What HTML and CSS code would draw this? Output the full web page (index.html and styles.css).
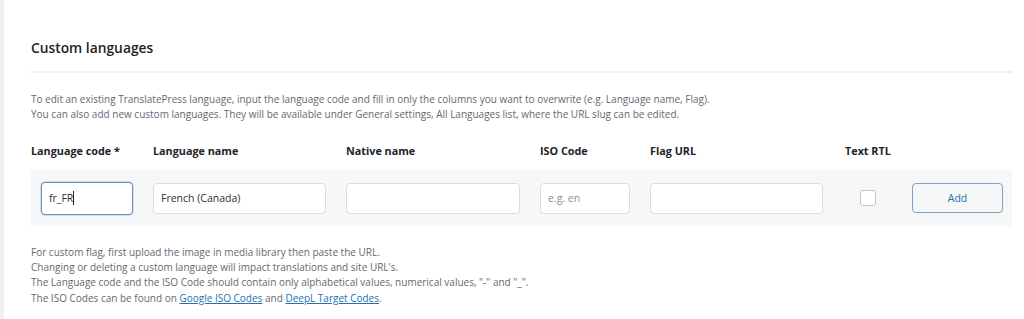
FILE: index.html
```html
<!DOCTYPE html>
<html>
<head>
<meta charset="utf-8">
<link rel="stylesheet" href="styles.css">
</head>
<body>
<div class="page">
  <div class="panel">
    <h2 class="title">Custom languages</h2>
    <div class="rule"></div>
    <p class="desc">To edit an existing TranslatePress language, input the language code and fill in only the columns you want to overwrite (e.g. Language name, Flag).<br>You can also add new custom languages. They will be available under General settings, All Languages list, where the URL slug can be edited.</p>
    <div class="grid head">
      <div class="h">Language code *</div>
      <div class="h">Language name</div>
      <div class="h">Native name</div>
      <div class="h">ISO Code</div>
      <div class="h">Flag URL</div>
      <div class="h">Text RTL</div>
      <div></div>
    </div>
    <div class="grid row">
      <div class="inp focus">fr_FR<span class="caret"></span></div>
      <div class="inp">French (Canada)</div>
      <div class="inp"></div>
      <div class="inp ph">e.g. en</div>
      <div class="inp w173"></div>
      <div class="cbcell"><span class="cb"></span></div>
      <div class="btn">Add</div>
    </div>
    <p class="notes">For custom flag, first upload the image in media library then paste the URL.<br>Changing or deleting a custom language will impact translations and site URL's.<br>The Language code and the ISO Code should contain only alphabetical values, numerical values, "-" and "_".<br>The ISO Codes can be found on <a href="#">Google ISO Codes</a> and <a href="#">DeepL Target Codes</a>.</p>
  </div>
</div>
</body>
</html>
```
FILE: styles.css
```css
html, body { margin: 0; padding: 0; background: #fff; }
body { font-family: "Open Sans", "Noto Sans", sans-serif; color: #1d2327; }
.page { height: 319px; border-left: 4px solid #f0f0f1; box-sizing: border-box; overflow: hidden; }
.panel { padding: 37px 12px 0 27px; }
.title { margin: 0; font-size: 13.8px; font-weight: 600; line-height: 21px; color: #1d2327; }
.rule { height: 2px; background: #f0f0f1; margin-top: 13px; }
.desc { margin: 19px 0 0; font-size: 10px; line-height: 15px; color: #646970; }
.grid { display: grid; grid-template-columns: 102px 173px 174px 90px 175px 47px 91px; column-gap: 20px; }
.head { margin-top: 17px; height: 22px; align-items: center; }
.h { font-size: 10.8px; font-weight: 700; color: #1d2327; }
.row { margin-top: 9px; background: #f6f7f7; height: 56px; align-items: center; }
.inp { height: 31px; box-sizing: border-box; border: 1px solid #dcdcde; border-radius: 4px; background: #fff; font-size: 10.5px; color: #2c3338; padding: 0 7px; display: flex; align-items: center; }
.w173 { width: 173px; }
.inp.focus { margin-left: 10px; height: 33px; border: 1.5px solid #6a93b9; box-shadow: 0 0 0 0.5px #a9c3dc; }
.caret { display: inline-block; width: 1px; height: 14px; background: #1d2327; }
.ph { color: #8c8f94; }
.cbcell { display: flex; padding-left: 15px; }
.cb { width: 16px; height: 16px; box-sizing: border-box; border: 1px solid #c3c4c7; border-radius: 3px; background: #fff; }
.btn { height: 30px; box-sizing: border-box; border: 1px solid #7ea4c7; border-radius: 4px; background: #f6f7f7; color: #2271b1; font-size: 10.5px; display: flex; align-items: center; justify-content: center; }
.notes { margin: 19px 0 0; font-size: 10px; line-height: 15.2px; color: #646970; }
.notes a { color: #2271b1; text-decoration: underline; }
```
